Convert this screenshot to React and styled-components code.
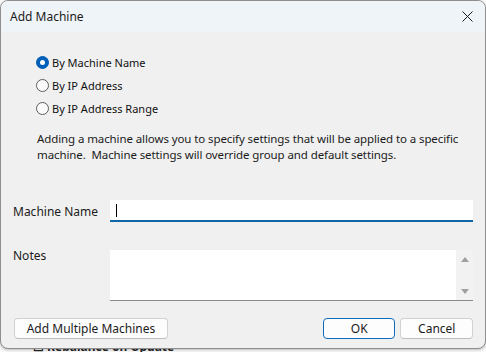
import React from "react";
import styled, { createGlobalStyle } from "styled-components";

const GlobalStyle = createGlobalStyle`
  html, body {
    margin: 0;
    padding: 0;
    background: #fafafa;
  }
  * {
    box-sizing: border-box;
  }
`;

const Desktop = styled.div`
  width: 486px;
  height: 352px;
  overflow: hidden;
  background: #fafafa;
  font-family: "Noto Sans", "Liberation Sans", sans-serif;
  color: #1b1b1b;
`;

const Window = styled.div`
  width: 486px;
  height: 349px;
  border: 1px solid #8e8e8e;
  border-radius: 8px;
  overflow: hidden;
  background: #f0f0f0;
  display: flex;
  flex-direction: column;
  box-shadow: 0 1px 3px rgba(0, 0, 0, 0.25);
`;

const TitleBar = styled.div`
  height: 31px;
  flex: none;
  display: flex;
  align-items: center;
  justify-content: space-between;
  padding: 0 9px 1px 9px;
  background: #eff4f9;
  font-size: 12px;
`;

const CloseButton = styled.div`
  width: 12px;
  height: 12px;
  margin-right: 3px;
  display: flex;
  align-items: center;
  justify-content: center;
`;

const Body = styled.div`
  flex: 1;
  display: flex;
  flex-direction: column;
  padding: 19px 12px 0 12px;
  font-size: 12px;
`;

const RadioGroup = styled.div`
  display: flex;
  flex-direction: column;
  padding-left: 23px;
`;

const RadioRow = styled.label`
  height: 23px;
  display: flex;
  align-items: center;
  gap: 3px;
  font-size: 11px;
  color: #111;
`;

const RadioCircle = styled.span`
  width: 13px;
  height: 13px;
  border-radius: 50%;
  flex: none;
  display: flex;
  align-items: center;
  justify-content: center;
  border: 1px solid ${(p) => (p.$checked ? "#005fb8" : "#5c5c5c")};
  background: ${(p) => (p.$checked ? "#005fb8" : "#fbfbfb")};

  &::after {
    content: "";
    display: ${(p) => (p.$checked ? "block" : "none")};
    width: 5px;
    height: 5px;
    border-radius: 50%;
    background: #ffffff;
  }
`;

const Description = styled.p`
  margin: 11px 0 0 24px;
  line-height: 16px;
  font-size: 11.5px;
  letter-spacing: -0.1px;
  white-space: nowrap;
`;

const FieldRow = styled.div`
  display: flex;
  align-items: ${(p) => (p.$top ? "flex-start" : "center")};
  margin-top: ${(p) => p.$gap}px;
`;

const FieldLabel = styled.div`
  width: 97px;
  flex: none;
  margin-top: ${(p) => (p.$top ? "-3px" : "0")};
`;

const TextInput = styled.div`
  width: 365px;
  height: 22px;
  background: #ffffff;
  border-bottom: 2px solid #1166a5;
  display: flex;
  align-items: center;
  padding-left: 6px;
`;

const Caret = styled.span`
  width: 1px;
  height: 13px;
  background: #000;
`;

const NotesBox = styled.div`
  width: 365px;
  height: 51px;
  background: #ffffff;
  border-bottom: 1px solid #8a8a8a;
  display: flex;
  justify-content: flex-end;
`;

const ScrollBar = styled.div`
  width: 17px;
  background: #f2f2f2;
  display: flex;
  flex-direction: column;
  justify-content: space-between;
  align-items: center;
  padding: 7px 0 6px 0;
`;

const Arrow = styled.span`
  width: 0;
  height: 0;
  border-left: 4px solid transparent;
  border-right: 4px solid transparent;
  ${(p) =>
    p.$down
      ? "border-top: 5px solid #a0a0a0;"
      : "border-bottom: 5px solid #a0a0a0;"}
`;

const ButtonBar = styled.div`
  display: flex;
  align-items: center;
  margin-top: 17px;
  padding-left: 1px;
`;

const Button = styled.button`
  height: 21px;
  width: ${(p) => p.$width}px;
  margin-left: ${(p) => p.$ml || 0}px;
  border-radius: 4px;
  border: 1px solid ${(p) => (p.$primary ? "#0f6cbd" : "#d1d1d1")};
  border-bottom-color: ${(p) => (p.$primary ? "#0f6cbd" : "#bdbdbd")};
  background: #fdfdfd;
  font-family: inherit;
  font-size: 12px;
  color: #1b1b1b;
  padding: 0;
`;

const Peek = styled.div`
  height: 3px;
  overflow: hidden;
  padding-left: 33px;
  font-size: 12px;
  font-weight: bold;
  color: #222;
  line-height: 12px;
`;

const PeekText = styled.div`
  margin-top: -8px;
`;

export default function App() {
  return (
    <>
      <GlobalStyle />
      <Desktop>
        <Window>
          <TitleBar>
            <span>Add Machine</span>
            <CloseButton>
              <svg width="11" height="11" viewBox="0 0 11 11">
                <path d="M0.5 0.5 L10.5 10.5 M10.5 0.5 L0.5 10.5" stroke="#1b1b1b" strokeWidth="1" />
              </svg>
            </CloseButton>
          </TitleBar>
          <Body>
            <RadioGroup>
              <RadioRow>
                <RadioCircle $checked />
                By Machine Name
              </RadioRow>
              <RadioRow>
                <RadioCircle />
                By IP Address
              </RadioRow>
              <RadioRow>
                <RadioCircle />
                By IP Address Range
              </RadioRow>
            </RadioGroup>
            <Description>
              Adding a machine allows you to specify settings that will be applied to a specific
              <br />
              machine.&nbsp; Machine settings will override group and default settings.
            </Description>
            <FieldRow $gap={37}>
              <FieldLabel>Machine Name</FieldLabel>
              <TextInput>
                <Caret />
              </TextInput>
            </FieldRow>
            <FieldRow $top $gap={28}>
              <FieldLabel $top>Notes</FieldLabel>
              <NotesBox>
                <ScrollBar>
                  <Arrow />
                  <Arrow $down />
                </ScrollBar>
              </NotesBox>
            </FieldRow>
            <ButtonBar>
              <Button $width={155}>Add Multiple Machines</Button>
              <Button $primary $width={73} $ml={155}>OK</Button>
              <Button $width={73} $ml={5}>Cancel</Button>
            </ButtonBar>
          </Body>
        </Window>
        <Peek>
          <PeekText>☐ Rebalance on Update</PeekText>
        </Peek>
      </Desktop>
    </>
  );
}
